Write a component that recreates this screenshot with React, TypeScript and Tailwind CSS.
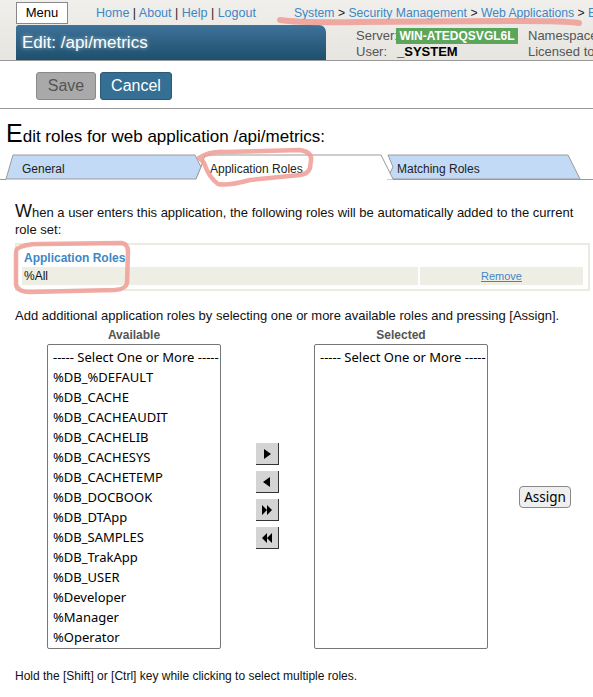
import React from 'react';

const available = [
  '----- Select One or More -----',
  '%DB_%DEFAULT',
  '%DB_CACHE',
  '%DB_CACHEAUDIT',
  '%DB_CACHELIB',
  '%DB_CACHESYS',
  '%DB_CACHETEMP',
  '%DB_DOCBOOK',
  '%DB_DTApp',
  '%DB_SAMPLES',
  '%DB_TrakApp',
  '%DB_USER',
  '%Developer',
  '%Manager',
  '%Operator',
];

const sans = { fontFamily: '"Liberation Sans", Arial, sans-serif' };
const ui = { fontFamily: '"Noto Sans", "Open Sans", sans-serif' };

function Sep() {
  return <span className="text-[#222]"> | </span>;
}

function Header() {
  return (
    <div className="bg-gradient-to-b from-[#f0efeb] to-[#e6e5e0] border-b border-[#9a9a9a]">
      <div className="flex h-[25px] items-center pt-[1px] text-[13px] whitespace-pre">
        <div className="ml-[16px] flex h-[22px] w-[52px] shrink-0 items-center justify-center border border-[#888] bg-white text-[13px] text-black">
          Menu
        </div>
        <div className="ml-[28px] shrink-0 text-[12.5px] text-[#3d87c6]">
          Home<Sep />About<Sep />Help<Sep />Logout
        </div>
        <div className="ml-[38px] shrink-0 text-[12.2px] text-[#3d87c6]">
          System <span className="text-[#222]">&gt;</span> Security Management{' '}
          <span className="text-[#222]">&gt;</span> Web Applications <span className="text-[#222]">&gt;</span> Edit
        </div>
      </div>
      <div className="flex h-[35px] whitespace-nowrap">
        <div className="ml-[16px] flex w-[310px] shrink-0 items-center rounded-tl-[3px] rounded-tr-[7px] bg-gradient-to-b from-[#3e7299] to-[#1d4f6d] pl-[6px] text-[17px] text-white [text-shadow:0_0_4px_rgba(255,255,255,0.6)]">
          Edit: /api/metrics
        </div>
        <div className="ml-[30px] flex shrink-0 flex-col pt-[3px] text-[13px] leading-[16px] text-[#555]">
          <div className="flex items-center">
            <span className="w-[40px] shrink-0">Server:</span>
            <span className="w-[122px] shrink-0 bg-[#5ba65b] text-center text-[12px] font-bold text-white">WIN-ATEDQSVGL6L</span>
            <span className="ml-[10px] shrink-0">Namespace:</span>
          </div>
          <div className="flex items-center">
            <span className="w-[41px] shrink-0">User:</span>
            <span className="w-[131px] shrink-0 font-bold text-black">_SYSTEM</span>
            <span className="shrink-0">Licensed to:</span>
          </div>
        </div>
      </div>
    </div>
  );
}

function Tabs() {
  return (
    <div className="relative mt-[3px] h-[28px]">
      <svg className="absolute inset-0" width="593" height="28" viewBox="0 0 593 28">
        <path d="M6,26 L13,2 L195,2 L201,14 L196,26 Z" fill="#c3daf6" stroke="#9a9a9a" strokeWidth="1" />
        <path d="M387,26 L393,14 L388,2 L568,2 L580,26 Z" fill="#c3daf6" stroke="#9a9a9a" strokeWidth="1" />
        <path d="M196,26 L201,14 L205,2 L381,2 L393,26" fill="#ffffff" stroke="#9a9a9a" strokeWidth="1" />
        <path d="M0,26.5 L6,26.5 M393,26.5 L593,26.5" stroke="#9a9a9a" strokeWidth="1" />
      </svg>
      <div className="relative flex h-[28px] items-center pt-[3px] text-[12px] text-[#222]">
        <span className="ml-[22px] w-[188px]">General</span>
        <span className="w-[187px]">Application Roles</span>
        <span>Matching Roles</span>
      </div>
    </div>
  );
}

function ArrowButton({ d }: { d: string }) {
  return (
    <div className="flex h-[22px] w-[23px] items-center justify-center border-r border-b border-[#333] bg-[#d4d4d4]">
      <svg width="12" height="12" viewBox="0 0 12 12">
        <path d={d} fill="#000" />
      </svg>
    </div>
  );
}

function ListBox({ items }: { items: string[] }) {
  return (
    <div className="h-[305px] w-[174px] rounded-[2px] border border-[#777] pt-[2px] pl-[5px] text-[13px] leading-[20px] text-black" style={ui}>
      {items.map((item) => (
        <div key={item} className="whitespace-nowrap">
          {item}
        </div>
      ))}
    </div>
  );
}

function Marks() {
  return (
    <svg className="pointer-events-none absolute top-0 left-0" width="593" height="697" viewBox="0 0 593 697">
      <g fill="none" stroke="#ee9c94" strokeOpacity="0.85" strokeWidth="4.5" strokeLinecap="round" strokeLinejoin="round">
        <path d="M280,20 Q300,23 360,22 L520,21 Q565,21 579,23" strokeWidth="6" />
        <path d="M199,158 Q210,151 225,152 L300,150 Q312,152 311,160 L310,168 Q308,174 300,175 L250,180 Q228,186 218,184 Q210,178 206,168 Q204,161 199,158" />
        <path d="M17,249 Q24,244 40,244 L122,243 Q128,244 128,252 L127,283 Q126,289 115,290 L30,292 Q17,292 16,284 L16,256 Q16,250 17,249" />
      </g>
    </svg>
  );
}

export default function App() {
  return (
    <div className="relative h-[697px] w-[593px] overflow-hidden bg-white" style={sans}>
      <Header />

      <div className="flex h-[48px] items-center gap-[4px] border-b border-[#9a9a9a] pl-[36px] pt-[2px]">
        <div className="flex h-[28px] w-[60px] items-center justify-center rounded-[3px] border border-[#8a8a8a] bg-[#a9a9a9] text-[16px] text-[#555]">
          Save
        </div>
        <div className="flex h-[28px] w-[72px] items-center justify-center rounded-[3px] border border-[#2b5a78] bg-[#356f94] text-[16px] text-white">
          Cancel
        </div>
      </div>

      <div className="pl-[6px] pt-[11px] text-[17px] leading-[26px] text-black">
        <span className="text-[25px]">E</span>dit roles for web application /api/metrics:
      </div>

      <Tabs />

      <div className="px-[15px] pt-[22px] text-[13px] leading-[17px] text-[#111]">
        <span className="text-[18px]">W</span>hen a user enters this application, the following roles will be automatically added to the current role set:
      </div>

      <div className="mt-[5px] mr-[3px] ml-[15px] border-2 border-[#ecebe0] px-[5px] pt-[4px] pb-[4px]">
        <div className="pl-[2px] text-[12px] leading-[18px] font-bold text-[#3d87c6]">Application Roles</div>
        <div className="flex h-[18px] gap-[2px] text-[12px] leading-[18px]">
          <div className="w-[396px] bg-[#efeee5] pl-[2px] text-[#111]">%All</div>
          <div className="flex-1 bg-[#efeee5] text-center text-[11px] text-[#3d87c6] underline">Remove</div>
        </div>
      </div>

      <div className="px-[15px] pt-[16px] text-[13px] leading-[17px] text-[#111]">
        Add additional application roles by selecting one or more available roles and pressing [Assign].
      </div>

      <div className="flex pt-[2px] pl-[47px]">
        <div className="flex flex-col">
          <div className="text-center text-[12px] leading-[18px] font-bold text-[#555]">Available</div>
          <ListBox items={available} />
        </div>
        <div className="ml-[35px] flex flex-col gap-[6px] pt-[117px]">
          <ArrowButton d="M3,1 L10,6 L3,11 Z" />
          <ArrowButton d="M9,1 L2,6 L9,11 Z" />
          <ArrowButton d="M1,1 L6,6 L1,11 Z M6,1 L11,6 L6,11 Z" />
          <ArrowButton d="M11,1 L6,6 L11,11 Z M6,1 L1,6 L6,11 Z" />
        </div>
        <div className="ml-[35px] flex flex-col">
          <div className="text-center text-[12px] leading-[18px] font-bold text-[#555]">Selected</div>
          <ListBox items={[available[0]]} />
        </div>
        <div className="ml-[31px] pt-[160px]">
          <div className="flex h-[22px] w-[52px] items-center justify-center rounded-[4px] border border-[#888] bg-[#efefef] text-[13.5px] text-black" style={ui}>
            Assign
          </div>
        </div>
      </div>

      <div className="px-[15px] pt-[18px] text-[12px] text-[#111]">
        Hold the [Shift] or [Ctrl] key while clicking to select multiple roles.
      </div>

      <Marks />
    </div>
  );
}
